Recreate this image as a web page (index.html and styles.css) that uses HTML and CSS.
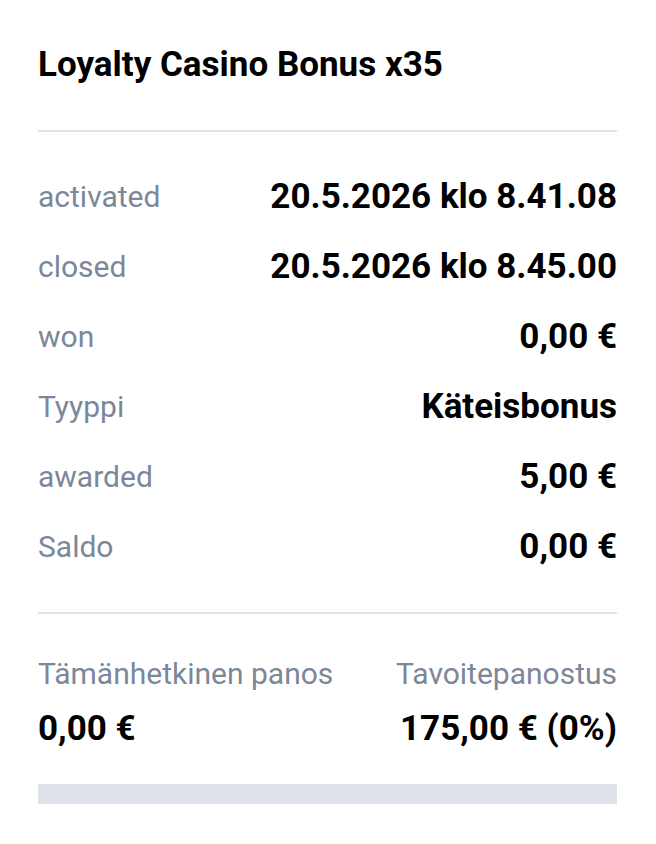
FILE: index.html
```html
<html lang="fi">

<head>
  <meta charset="utf-8">
  <title>Loyalty Casino Bonus x35</title>
  <link rel="stylesheet" href="styles.css">
</head>

<body>

  <div class="card">
    <h1 class="title">Loyalty Casino Bonus x35</h1>

    <div class="details">
      <div class="row"><span class="label">activated</span><span class="value">20.5.2026 klo 8.41.08</span></div>
      <div class="row"><span class="label">closed</span><span class="value">20.5.2026 klo 8.45.00</span></div>
      <div class="row"><span class="label">won</span><span class="value">0,00 €</span></div>
      <div class="row"><span class="label">Tyyppi</span><span class="value">Käteisbonus</span></div>
      <div class="row"><span class="label">awarded</span><span class="value">5,00 €</span></div>
      <div class="row"><span class="label">Saldo</span><span class="value">0,00 €</span></div>
    </div>

    <div class="wager">
      <div class="wager-labels">
        <span class="label">Tämänhetkinen panos</span>
        <span class="label">Tavoitepanostus</span>
      </div>
      <div class="wager-values">
        <span class="value">0,00 €</span>
        <span class="value">175,00 € (0%)</span>
      </div>
      <div class="progress"><div class="progress-fill" style="width: 0%"></div></div>
    </div>
  </div>

</body>

</html>
```

FILE: styles.css
```css
body {
  font-family: Roboto, 'Liberation Sans', Arial, sans-serif;
  background-color: #fff;
  color: #000;
  margin: 0;
  padding: 0;
}

.card {
  padding: 46px 39px 40px 38px;
}

.title {
  font-size: 35px;
  font-weight: 700;
  line-height: 38px;
  margin: 0;
  padding-bottom: 46px;
  border-bottom: 2px solid #e1e3e9;
}

.details {
  padding-top: 30px;
  padding-bottom: 30px;
  border-bottom: 2px solid #e1e3e9;
}

.row {
  display: flex;
  justify-content: space-between;
  height: 70px;
  line-height: 70px;
}

.label {
  font-size: 30px;
  color: #7c8799;
}

.value {
  font-size: 35px;
  font-weight: 700;
}

.wager {
  padding-top: 40px;
}

.wager-labels,
.wager-values {
  display: flex;
  justify-content: space-between;
  align-items: baseline;
  line-height: 40px;
}

.wager-values {
  margin-top: 15px;
}

.progress {
  margin-top: 35px;
  height: 20px;
  background-color: #dfe2ea;
}

.progress-fill {
  height: 100%;
  background-color: #2f6fe4;
}
```
